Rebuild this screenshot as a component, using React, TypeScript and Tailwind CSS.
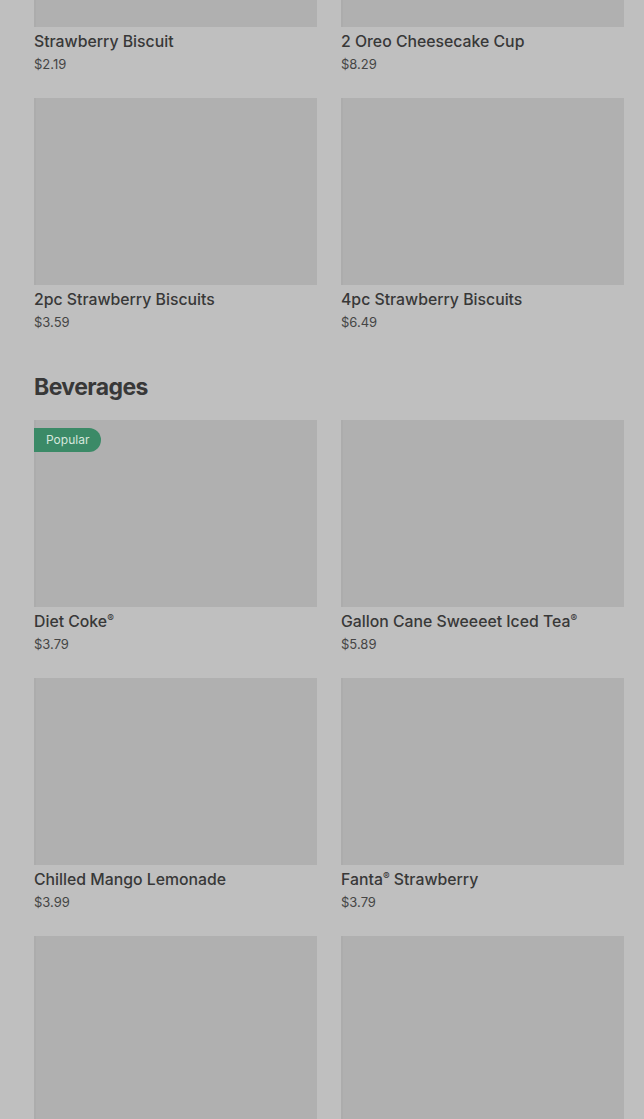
import React from 'react';

type Item = { name?: string; price?: string; popular?: boolean };

const desserts: Item[] = [
  { name: 'Strawberry Biscuit', price: '$2.19' },
  { name: '2 Oreo Cheesecake Cup', price: '$8.29' },
  { name: '2pc Strawberry Biscuits', price: '$3.59' },
  { name: '4pc Strawberry Biscuits', price: '$6.49' },
];

const beverages: Item[] = [
  { name: 'Diet Coke®', price: '$3.79', popular: true },
  { name: 'Gallon Cane Sweeeet Iced Tea®', price: '$5.89' },
  { name: 'Chilled Mango Lemonade', price: '$3.99' },
  { name: 'Fanta® Strawberry', price: '$3.79' },
  {}, // below the fold
  {},
];

// render ® as a small raised mark like the reference
const renderName = (name: string) =>
  name.split('®').map((part, i, arr) => (
    <React.Fragment key={i}>
      {part}
      {i < arr.length - 1 && <span className="text-[10px] align-[5px] leading-none">®</span>}
    </React.Fragment>
  ));

const ItemCard: React.FC<{ item: Item }> = ({ item }) => {
  return (
    <div className="flex flex-col">
      {/* image placeholder */}
      <div className="relative h-[187px] bg-[#b0b0b0] border-l-2 border-[#acacac]">
        {item.popular && (
          <div className="absolute left-[-2px] top-[8px] h-[24px] pl-3 pr-3 flex items-center rounded-r-full bg-[#3b8a67] text-[12px] text-[#d6e7dd]">
            Popular
          </div>
        )}
      </div>
      <div className="pt-[5px] h-[47px]">
        {item.name && (
          <>
            <div className="text-[15.8px] leading-[20px] font-medium text-[#383838] truncate">
              {renderName(item.name)}
            </div>
            <div className="mt-[2px] text-[13px] leading-[20px] text-[#454545]">{item.price}</div>
          </>
        )}
      </div>
    </div>
  );
};

export default function App() {
  return (
    <div
      className="h-[1119px] overflow-hidden bg-[#bfbfbf] pl-[34px] pr-[20px]"
      style={{ fontFamily: 'Inter, Roboto, "Noto Sans", sans-serif' }}
    >
      <div className="-mt-[160px]">
        <div className="grid grid-cols-2 gap-x-6 gap-y-6">
          {desserts.map((it, i) => (
            <ItemCard key={i} item={it} />
          ))}
        </div>

        <h2 className="mt-[39px] mb-[17px] text-[23px] leading-[32px] font-bold tracking-tight text-[#383838]">
          Beverages
        </h2>

        <div className="grid grid-cols-2 gap-x-6 gap-y-6">
          {beverages.map((it, i) => (
            <ItemCard key={i} item={it} />
          ))}
        </div>
      </div>
    </div>
  );
}
